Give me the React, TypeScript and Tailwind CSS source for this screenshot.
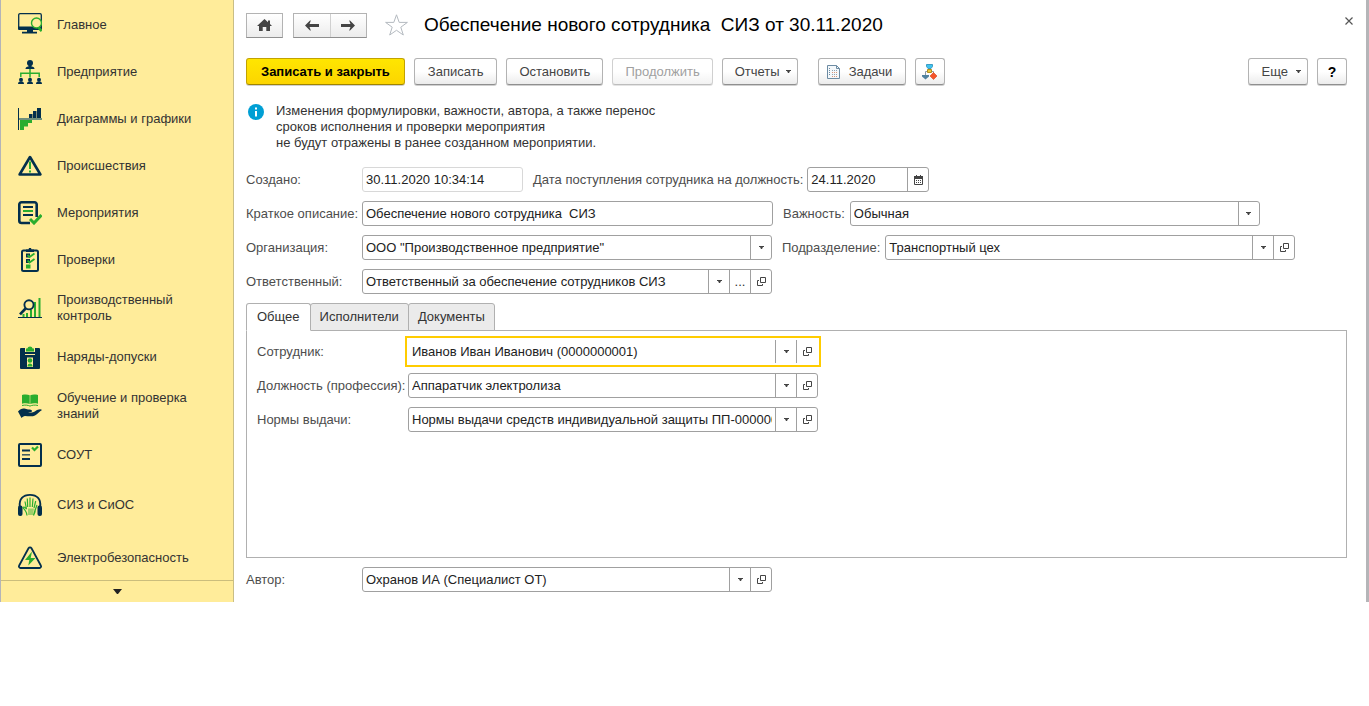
import { useState, type ReactNode } from "react";

const NAVY = "#032f4c";
const GREEN = "#2aad2e";

function SideIcon({ children }: { children: ReactNode }) {
  return (
    <svg width="24" height="24" viewBox="0 0 24 24" fill="none" aria-hidden="true" className="shrink-0">
      {children}
    </svg>
  );
}

const worker = (x: number) => (
  <g key={x} fill={NAVY}>
    <circle cx={x} cy="19.8" r="2" />
    <path d={`M${x - 3} 24c0-2 1.2-2.8 3-2.8s3 .8 3 2.8z`} />
  </g>
);

const sections = [
  {
    title: "Главное",
    size: "h-[47px]",
    icon: (
      <SideIcon>
        <path d="M.7 14V2A1.300 1.300 0 0 1 2 .7h20A1.300 1.300 0 0 1 23.300 2v12" stroke={NAVY} strokeWidth="1.300" />
        <path d="M0 13.500h24V16a1 1 0 0 1-1 1H1a1 1 0 0 1-1-1z" fill={NAVY} />
        <path d="M9 17h6v1.800h4v1.700H4v-1.700h5z" fill={NAVY} />
        <circle cx="18.500" cy="10" r="5" fill="#ffec9a" stroke={GREEN} strokeWidth="1.400" />
        <path d="M20.500 14.500l3.200 3.500" stroke={GREEN} strokeWidth="2.600" />
      </SideIcon>
    ),
  },
  {
    title: "Предприятие",
    size: "h-[47px]",
    icon: (
      <SideIcon>
        <circle cx="12" cy="3" r="3" fill={NAVY} />
        <path d="M10.500 5h3v1.500c2 .3 3 1 3 2.500h-9c0-1.500 1-2.200 3-2.500z" fill={NAVY} />
        <path d="M12 9v8.500M2.800 17v-3.800h18.400V17" stroke={GREEN} strokeWidth="1.500" />
        {[3, 12, 21].map(worker)}
      </SideIcon>
    ),
  },
  {
    title: "Диаграммы и графики",
    size: "h-[47px]",
    icon: (
      <SideIcon>
        <path d="M.5 1v22" stroke={NAVY} />
        <path d="M2 12h4v11H2zM6 12h4v7.500H6zM10 12h4v4h-4z" fill={GREEN} />
        <path d="M11 7h3.500v4H11zM15 4h3.500v7H15zM19 1h4v10h-4z" fill={NAVY} />
        <path d="M1 12h23" stroke="#6f8f7c" strokeWidth="2" />
      </SideIcon>
    ),
  },
  {
    title: "Происшествия",
    size: "h-[47px]",
    icon: (
      <SideIcon>
        <path d="M12 3L22.400 20.500H1.600z" stroke={NAVY} strokeWidth="2.600" strokeLinejoin="round" />
        <path d="M12 7.500V15M12 16.500v2" stroke={GREEN} strokeWidth="2" />
      </SideIcon>
    ),
  },
  {
    title: "Мероприятия",
    size: "h-[47px]",
    icon: (
      <SideIcon>
        <path d="M12 22H3.500A2.200 2.200 0 0 1 1.300 20V3.500A2.200 2.200 0 0 1 3.500 1.300h13A2.200 2.200 0 0 1 18.700 3.500V16" stroke={NAVY} strokeWidth="2.600" />
        <path d="M5 6h10M5 14h10" stroke={NAVY} strokeWidth="2" />
        <path d="M5 10h10" stroke={GREEN} strokeWidth="2" />
        <path d="M12 18l4 4 7.500-8" stroke={GREEN} strokeWidth="3" />
      </SideIcon>
    ),
  },
  {
    title: "Проверки",
    size: "h-[47px]",
    icon: (
      <SideIcon>
        <rect x="4" y="2.500" width="16" height="20.500" rx="1.500" stroke={NAVY} strokeWidth="2" />
        <path d="M8 4V1.500h2.500L11 0h2l.5 1.500H16V4z" fill={NAVY} />
        <path d="M8 5.500h4v4H8zM8 11h4v4H8z" fill={NAVY} />
        <path d="M9.500 7l2 2 5-3.500M9.500 12.500l2 2 5-3.500" stroke={GREEN} strokeWidth="1.800" />
        <path d="M8 16.500h4.500v4H8z" fill={GREEN} />
      </SideIcon>
    ),
  },
  {
    title: "Производственный контроль",
    size: "h-[49px]",
    icon: (
      <SideIcon>
        <path d="M5.500 18v3M9 17v4M13 14v7M17 6v15M21.500 2v19" stroke={GREEN} strokeWidth="2" />
        <path d="M0 21.500h24" stroke={NAVY} />
        <circle cx="11" cy="8.800" r="4.600" fill="#ffec9a" stroke={NAVY} strokeWidth="1.900" />
        <path d="M7.600 12.500L2 18.300" stroke={NAVY} strokeWidth="2.600" />
      </SideIcon>
    ),
  },
  {
    title: "Наряды-допуски",
    size: "h-[49px]",
    icon: (
      <SideIcon>
        <path d="M3 3h4v3.500h10V3h4a1 1 0 0 1 1 1v19a1 1 0 0 1-1 1H3a1 1 0 0 1-1-1V4a1 1 0 0 1 1-1z" fill={NAVY} />
        <path d="M7 2.500h10V7H7z" fill="#ffec9a" />
        <path d="M8 6.500V3.500h1.300a2.800 2.800 0 0 1 5.400 0H16v3z" fill={GREEN} />
        <path d="M7 9.500h10" stroke="#ffec9a" />
        <path d="M9 12.500h6V22H9z" fill="#ffec9a" />
        <circle cx="12" cy="15.500" r="2.300" fill={GREEN} />
        <path d="M9.500 21.500c0-2 1-3 2.500-3s2.500 1 2.500 3z" fill={GREEN} />
      </SideIcon>
    ),
  },
  {
    title: "Обучение и проверка знаний",
    size: "h-[49px]",
    icon: (
      <SideIcon>
        <path d="M4 1c3-.8 6-.6 7.700.3V10C10 9.200 7 9 4 9.800zM12.300 1.300C14 .4 17 .2 20 1v8.800C17 9 14 9.200 12.300 10z" fill={GREEN} />
        <path d="M4 11.500c3-.8 6-.4 8 .6 2-1 5-1.400 8-.6" stroke={GREEN} />
        <path d="M0 17.500c2-2.500 4.500-3.500 6.500-3l3.500 1c2 0 4 0 4 1.500s-2.500 1.300-4 1.500c3 .5 5.500 0 7.500-1.500 2-1.300 5-2.500 6.500-1-2.500 1.500-4.500 4-7 5.500-3 1.500-7 .5-10 .5-1.500 0-2.500 1-3.500 2z" fill={NAVY} />
      </SideIcon>
    ),
  },
  {
    title: "СОУТ",
    size: "h-[49px]",
    icon: (
      <SideIcon>
        <rect x="1" y="1" width="22" height="22" rx="1" stroke={NAVY} strokeWidth="2" />
        <path d="M4 7.500h8M4 16h8" stroke={NAVY} strokeWidth="1.800" />
        <path d="M4 11.800h8" stroke={NAVY} strokeWidth="1.600" opacity=".75" />
        <path d="M14 4.500l2.500 2.500L20 3.500" stroke={GREEN} strokeWidth="2.200" />
      </SideIcon>
    ),
  },
  {
    title: "СИЗ и СиОС",
    size: "h-[51px]",
    icon: (
      <SideIcon>
        <path d="M1.800 14C.8 6 5 1.900 12 1.900S23.200 6 22.200 14" stroke={NAVY} strokeWidth="1.900" />
        <rect x="0" y="12.500" width="4.500" height="10.500" rx="2" fill={NAVY} />
        <rect x="19.500" y="12.500" width="4.500" height="10.500" rx="2" fill={NAVY} />
        <path d="M9 22.500c0-2-.5-3-1.500-4.500L5 14.500c.8-.8 2-.3 3.500 1.500L7 8.500M9.700 14L9.300 5.500M12 14V4.500M14.300 14l.7-8.500M16 15l1.700-7M17 17.500l2-5.500M17.300 16.500c0 3-1 3.500-1.800 6z" stroke={GREEN} strokeWidth="1.200" />
        <path d="M10 15.500h6l-1 6.500h-5z" fill={GREEN} opacity=".45" />
      </SideIcon>
    ),
  },
  {
    title: "Электробезопасность",
    size: "h-[50px] pt-1.5",
    icon: (
      <SideIcon>
        <path d="M10.500 2.200a1.800 1.800 0 0 1 3 0L22.800 19.500a1.600 1.600 0 0 1-1.400 2.500H2.600a1.600 1.600 0 0 1-1.400-2.500z" stroke={NAVY} strokeWidth="1.800" />
        <path d="M14 5.500L7 14h4.300l-1 5.500L17.500 12h-4.800z" fill={GREEN} />
      </SideIcon>
    ),
  },
];

function Caret() {
  return (
    <svg width="5" height="3" viewBox="0 0 5 3" fill="#444" aria-hidden="true">
      <path d="M0 0h5v1H4L3 3H2L1 1H0z" />
    </svg>
  );
}

function OpenIcon() {
  return (
    <svg width="9" height="9" viewBox="0 0 9 9" fill="none" stroke="#444" aria-hidden="true">
      <path d="M3.500.5h5v5h-5zM2 3.500H.5v5h5V7" />
    </svg>
  );
}

const cell = "flex w-[21px] shrink-0 items-center justify-center border-l border-[#a0a0a0]";

type FieldProps = {
  id: string;
  label: string;
  value: string;
  labelWidth?: string;
  width?: string;
  actions?: string[];
  readOnly?: boolean;
  focused?: boolean;
};

function Field({ id, label, value, labelWidth = "", width = "w-[410px]", actions = [], readOnly, focused }: FieldProps) {
  const frame = focused
    ? "border-transparent outline-2 outline-offset-1 outline-[#ffcc00]"
    : readOnly
      ? "rounded-[3px] border-[#d8d8d8]"
      : "rounded-[3px] border-[#a0a0a0]";
  return (
    <div className="flex items-center">
      <label htmlFor={id} className={`shrink-0 whitespace-nowrap text-[#4d4d4d] ${labelWidth}`}>
        {label}
      </label>
      <div className={`flex h-[25px] border bg-white ${width} ${frame}`}>
        <input
          id={id}
          defaultValue={value}
          readOnly={readOnly}
          className="min-w-0 flex-1 bg-transparent px-[3px] text-[#222] outline-none"
        />
        {actions.includes("list") && (
          <button type="button" className={cell} aria-label="Выбрать из списка">
            <Caret />
          </button>
        )}
        {actions.includes("more") && (
          <button type="button" className={cell} aria-label="Показать все">
            ...
          </button>
        )}
        {actions.includes("open") && (
          <button type="button" className={cell} aria-label="Открыть">
            <OpenIcon />
          </button>
        )}
        {actions.includes("date") && (
          <button type="button" className={cell} aria-label="Календарь">
            <svg width="9" height="10" viewBox="0 0 9 10" aria-hidden="true">
              <path d="M.5 1.500h8v8h-8z" fill="none" stroke="#444" />
              <path d="M0 1h9v3H0zM2 0h1v1H2zM6 0h1v1H6z" fill="#444" />
              <path d="M2 5.500h5M2 7.500h5" stroke="#444" strokeDasharray="1 1" />
            </svg>
          </button>
        )}
      </div>
    </div>
  );
}

const buttonBase =
  "flex h-[27px] items-center justify-center rounded-[3px] border border-[#b3b3b3] border-b-[#8f8f8f] bg-linear-to-b from-white from-50% to-[#ececec] text-[#444] shadow-[0_1px_0_#d0d0d0]";

const tabs = ["Общее", "Исполнители", "Документы"];

export default function App() {
  const [tab, setTab] = useState(tabs[0]);

  return (
    <div className="flex bg-white font-['Liberation_Sans',Arial,sans-serif] text-[13px] leading-4 text-[#333]">
      <nav className="flex w-[234px] shrink-0 flex-col border-x border-l-[#b4b4b8] border-r-[#c9be86] bg-[#ffec9a]">
        <ul className="flex-1 pt-px">
          {sections.map((section) => (
            <li key={section.title}>
              <a href="#" className={`flex items-center gap-[15px] pr-8 pl-[17px] ${section.size}`}>
                {section.icon}
                <span>{section.title}</span>
              </a>
            </li>
          ))}
        </ul>
        <button aria-label="Ещё разделы" className="flex h-[22px] items-center justify-center border-t border-[#cbbd7c]">
          <svg width="9" height="5" viewBox="0 0 9 5" fill="#222" aria-hidden="true">
            <path d="M0 0h9L5 5H4z" />
          </svg>
        </button>
      </nav>

      <main className="min-w-0 flex-1 border-r-3 border-[#b5b5b8] pt-3 pr-[19px] pb-[10px] pl-3">
        <header className="flex h-[26px] items-center">
          <button aria-label="Начальная страница" className="flex h-[25px] w-[37px] items-center justify-center border border-[#b3b3b3] border-b-[#8f8f8f] bg-linear-to-b from-white to-[#ececec]">
            <svg width="15" height="12" viewBox="0 0 15 12" fill="#444" aria-hidden="true">
              <path d="M7.500 0L11 3.200V1.500h2V5l2 2H13v5H9.300V8H5.700v4H2V7H0z" />
            </svg>
          </button>
          <div className="ml-[10px] flex h-[25px] w-[74px] border border-[#b3b3b3] border-b-[#8f8f8f] bg-linear-to-b from-white to-[#ececec]">
            <button aria-label="Назад" className="flex flex-1 items-center justify-center border-r border-[#d0d0d0]">
              <svg width="14" height="11" viewBox="0 0 14 11" fill="#444" aria-hidden="true">
                <path d="M0 5.500L5.500 0v1.500L4.500 4H14v3H4.500l1 2.500V11z" />
              </svg>
            </button>
            <button aria-label="Вперёд" className="flex flex-1 items-center justify-center">
              <svg width="14" height="11" viewBox="0 0 14 11" fill="#444" aria-hidden="true">
                <path d="M14 5.500L8.500 0v1.500l1 2.500H0v3h9.500l-1 2.500V11z" />
              </svg>
            </button>
          </div>
          <button aria-label="В избранное" className="ml-[17px]">
            <svg width="25" height="24" viewBox="0 0 25 24" fill="none" stroke="#b4bac0" aria-hidden="true">
              <path d="M12.500 1.800l2.700 7.600h8.200l-6.600 4.800 2.500 7.800-6.800-4.700L5.700 22l2.500-7.800-6.600-4.800h8.200z" />
            </svg>
          </button>
          <h1 className="ml-[15px] text-[19px] whitespace-pre text-black">Обеспечение нового сотрудника  СИЗ от 30.11.2020</h1>
          <button aria-label="Закрыть" className="-mr-[6px] mb-2 ml-auto">
            <svg width="8" height="8" viewBox="0 0 8 8" stroke="#555" strokeWidth="1.200" aria-hidden="true">
              <path d="M.5.5l7 7M7.500.5l-7 7" />
            </svg>
          </button>
        </header>

        <div className="mt-5 flex gap-[9px]">
          <button className="flex h-[27px] items-center rounded-[3px] border border-[#c2a200] border-b-[#a08500] bg-linear-to-b from-[#ffe600] to-[#fcd500] px-[14px] font-bold text-black shadow-[0_1px_0_#d0d0d0]">
            Записать и закрыть
          </button>
          <button className={`${buttonBase} px-[13px]`}>Записать</button>
          <button className={`${buttonBase} px-3`}>Остановить</button>
          <button disabled className="flex h-[27px] items-center rounded-[3px] border border-[#d0d0d0] border-b-[#bdbdbd] bg-linear-to-b from-white from-50% to-[#f2f2f2] px-3 text-[#a0a0a0] shadow-[0_1px_0_#e4e4e4]">
            Продолжить
          </button>
          <button className={`${buttonBase} gap-[6px] pr-[6px] pl-3`}>
            Отчеты
            <Caret />
          </button>
          <button className={`${buttonBase} ml-[11px] gap-[9px] pr-[13px] pl-2`}>
            <svg width="13" height="14" viewBox="0 0 13 14" fill="none" aria-hidden="true">
              <path d="M.5.500h9l3 3v10H.5z" fill="#f4f8fb" stroke="#6c8ba3" />
              <path d="M9.500.5v3h3" stroke="#6c8ba3" />
              <path d="M2.500 3v8" stroke="#6c8ba3" strokeDasharray="1 1" />
              <path d="M5 5.500h5M5 9.500h5" stroke="#8fa5b5" strokeDasharray="1 1" />
              <path d="M5 7.500h5M5 11.500h5" stroke="#d9967a" strokeDasharray="1 1" />
            </svg>
            Задачи
          </button>
          <button aria-label="Карта маршрута" className={`${buttonBase} w-[30px]`}>
            <svg width="16" height="16" viewBox="0 0 16 16" fill="none" aria-hidden="true">
              <path d="M5.500 7.500H3.500V12M9.500 7.500h2V11" stroke="#8a99a6" />
              <path d="M4.500.5h6v2l-1.500 2H6L4.500 2.500z" fill="#3fc3ee" stroke="#3d9cc4" />
              <path d="M5.500 5.500h4v3h-4z" fill="#ecc93a" stroke="#b08f1c" />
              <path d="M0 11h7v1.500L3.500 15.500 0 12.500z" fill="#4f819f" />
              <path d="M11.500 8.500L15 12l-3.500 3.500L8 12z" fill="#f4552a" stroke="#d8431c" strokeWidth=".6" />
            </svg>
          </button>
          <button className={`${buttonBase} ml-auto gap-2 pr-[6px] pl-[13px]`}>
            Еще
            <Caret />
          </button>
          <button aria-label="Справка" className={`${buttonBase} w-[30px] text-sm font-bold text-black`}>
            ?
          </button>
        </div>

        <div className="mt-[18px] flex gap-3 pl-[2px]">
          <svg width="16" height="16" viewBox="0 0 16 16" aria-hidden="true" className="mt-px shrink-0">
            <circle cx="8" cy="8" r="8" fill="#009fd4" />
            <path d="M7 3.500h2v2H7zM7 7h2v5.500H7z" fill="#fff" />
          </svg>
          <p>
            Изменения формулировки, важности, автора, а также перенос
            <br />
            сроков исполнения и проверки мероприятия
            <br />
            не будут отражены в ранее созданном мероприятии.
          </p>
        </div>

        <form className="mt-4" onSubmit={(event) => event.preventDefault()}>
          <div className="flex flex-col gap-[9px]">
            <div className="flex gap-[10px]">
              <Field id="created" label="Создано:" value="30.11.2020 10:34:14" labelWidth="w-[116px]" width="w-[161px]" readOnly />
              <Field id="hired" label="Дата поступления сотрудника на должность:" value="24.11.2020" labelWidth="pr-1" width="w-[122px]" actions={["date"]} />
            </div>
            <div className="flex gap-[10px]">
              <Field id="summary" label="Краткое описание:" value="Обеспечение нового сотрудника  СИЗ" labelWidth="w-[116px]" width="w-[411px]" />
              <div className="flex items-center">
                <label htmlFor="priority" className="pr-[5px] text-[#4d4d4d]">
                  Важность:
                </label>
                <div className="relative flex h-[25px] w-[410px] rounded-[3px] border border-[#a0a0a0]">
                  <select id="priority" className="flex-1 appearance-none bg-transparent px-[3px] text-[#222] outline-none">
                    <option>Обычная</option>
                  </select>
                  <span className={`pointer-events-none absolute inset-y-0 right-0 ${cell}`}>
                    <Caret />
                  </span>
                </div>
              </div>
            </div>
            <div className="flex gap-[10px]">
              <Field id="company" label="Организация:" value={'ООО "Производственное предприятие"'} labelWidth="w-[116px]" actions={["list"]} />
              <Field id="department" label="Подразделение:" value="Транспортный цех" labelWidth="pr-[5px]" actions={["list", "open"]} />
            </div>
            <Field id="responsible" label="Ответственный:" value="Ответственный за обеспечение сотрудников СИЗ" labelWidth="w-[116px]" actions={["list", "more", "open"]} />
          </div>

          <div role="tablist" className="mt-[9px] flex">
            {tabs.map((name, i) => (
              <button
                key={name}
                role="tab"
                type="button"
                aria-selected={tab === name}
                onClick={() => setTab(name)}
                className={`h-7 rounded-t-[3px] border border-[#b0b0b0] text-[#333] ${i > 0 ? "-ml-px px-[9px]" : "px-[10px]"} ${
                  tab === name ? "relative border-b-white bg-white" : "bg-[#ebebeb]"
                }`}
              >
                {name}
              </button>
            ))}
          </div>
          <div role="tabpanel" className="-mt-px flex min-h-[228px] flex-col gap-[9px] border border-[#b0b0b0] px-[10px] py-2">
            <Field id="employee" label="Сотрудник:" value="Иванов Иван Иванович (0000000001)" labelWidth="w-[151px]" actions={["list", "open"]} focused />
            <Field id="position" label="Должность (профессия):" value="Аппаратчик электролиза" labelWidth="w-[151px]" actions={["list", "open"]} />
            <Field id="norms" label="Нормы выдачи:" value="Нормы выдачи средств индивидуальной защиты ПП-000000001" labelWidth="w-[151px]" actions={["list", "open"]} />
          </div>

          <div className="mt-[9px]">
            <Field id="author" label="Автор:" value="Охранов ИА (Специалист ОТ)" labelWidth="w-[116px]" actions={["list", "open"]} />
          </div>
        </form>
      </main>
    </div>
  );
}
